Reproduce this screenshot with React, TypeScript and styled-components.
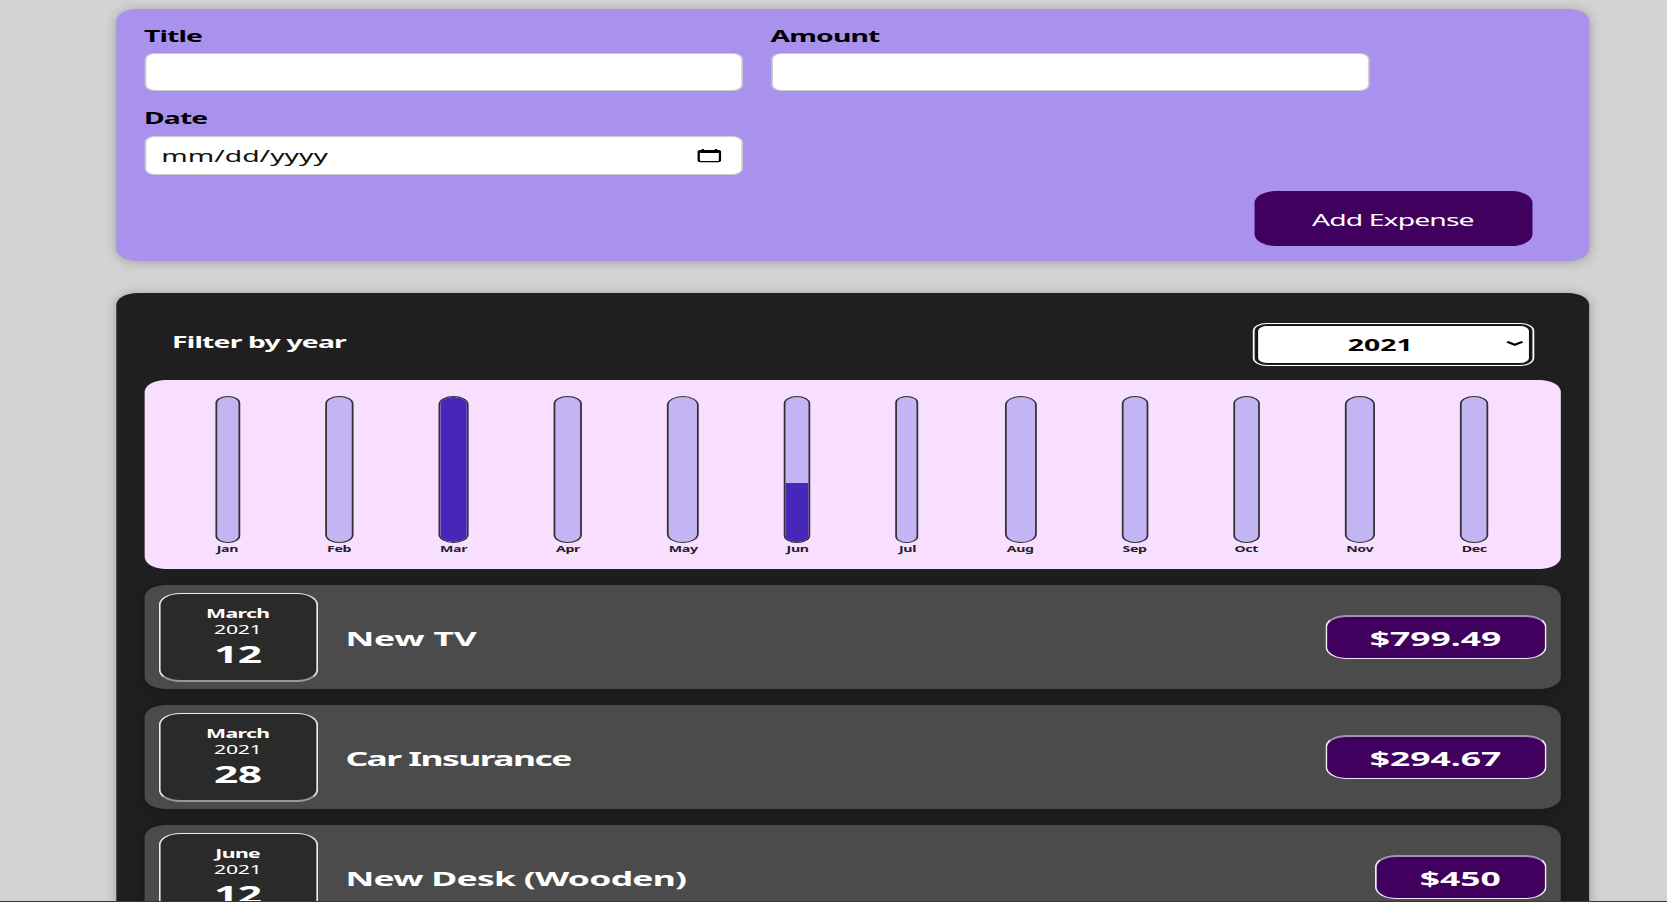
import React, { useState } from "react";
import styled, { createGlobalStyle } from "styled-components";

const STRETCH = 1.7702;

const GlobalStyle = createGlobalStyle`
  * { box-sizing: border-box; }
  html, body { margin: 0; padding: 0; background: #d3d3d3; overflow: hidden; }
  body, input, select, button {
    font-family: "Noto Sans", "Open Sans", sans-serif;
  }
`;

/* The whole page is drawn wide: every part inside is stretched horizontally. */
const Page = styled.div`
  width: ${1669 / STRETCH}px;
  height: 902px;
  overflow: hidden;
  padding: 8.7px 0 0 66px;
  transform: translateX(-0.5px) scaleX(${STRETCH});
  transform-origin: 0 0;
  background: #d3d3d3;
  border-bottom: 1px solid #3a3538;
`;

const Card = styled.section<{ $tone: string }>`
  width: 832px;
  padding: 16px;
  border-radius: 12px;
  background: ${(p) => p.$tone};
  box-shadow: 0 1px 8px rgba(0, 0, 0, 0.25);
`;

const ExpenseForm = styled(Card).attrs({ as: "form" })`
  height: 252.6px;
  margin-bottom: 32px;
`;

const Controls = styled.div`
  display: flex;
  flex-wrap: wrap;
  gap: 16.4px 16px;
`;

const Field = styled.label`
  display: flex;
  flex-direction: column;
  gap: 6.4px;
`;

const Label = styled.span`
  font-size: 16px;
  line-height: 22.4px;
  font-weight: 700;
  color: #000;
  letter-spacing: -0.5px;
  margin-left: -0.4px;
`;

const Input = styled.input`
  width: 338px;
  height: 37.4px;
  padding: 8px;
  border: 1px solid #ccc;
  border-radius: 6px;
  background: #fff;
  font-size: 16px;
`;

const DateBox = styled.div`
  width: 338px;
  height: 39.4px;
  display: flex;
  align-items: center;
  justify-content: space-between;
  padding: 1px 11px 0 8.4px;
  border: 1px solid #ccc;
  border-radius: 6px;
  background: #fff;
  font-size: 16px;
  color: #111;
`;

const Actions = styled.div`
  display: flex;
  justify-content: flex-end;
  padding: 16px 16px 0 0;
`;

const AddButton = styled.button`
  width: 157px;
  height: 54.6px;
  padding: 2px 0.8px 0 0;
  border: 1px solid #40005d;
  border-radius: 12px;
  background: #40005d;
  color: #fff;
  font-size: 16px;
  letter-spacing: -0.5px;
`;

const Expenses = styled(Card)`
  height: 760px;
`;

const FilterRow = styled.div`
  height: 70.5px;
  display: flex;
  align-items: center;
  justify-content: space-between;
  padding: 0 16px 0 15.5px;
`;

const FilterTitle = styled.h2`
  margin: 0;
  padding-bottom: 6px;
  font-size: 16px;
  line-height: 22px;
  color: #fff;
  letter-spacing: -0.46px;
`;

const YearPicker = styled.div`
  position: relative;
  width: 155px;
  height: 39px;
  margin: 0 1px 0 0;
  border: 1px solid #101010;
  border-radius: 6px;
  outline: 1px solid #fff;
  outline-offset: 1px;
  background: #fff;
  display: flex;
  align-items: center;
  color: #000;
  font-weight: 700;
`;

const YearValue = styled.span`
  flex: 1;
  text-align: center;
  padding-right: 15px;
`;

const Chevron = styled.svg`
  position: absolute;
  right: 3px;
  top: 14px;
`;

const Chart = styled.div`
  height: 189.4px;
  display: flex;
  justify-content: space-around;
  padding: 16px 16.8px 16px 15.7px;
  border-radius: 12px;
  background: #f8dfff;
`;

const Month = styled.div<{ $width: number }>`
  width: ${(p) => p.$width / STRETCH}px;
  display: flex;
  flex-direction: column;
  align-items: center;
`;

const BarTrack = styled.div`
  width: 100%;
  height: 147px;
  flex: none;
  display: flex;
  flex-direction: column;
  justify-content: flex-end;
  border: 1px solid #313131;
  border-radius: 12px;
  background: #c3b4f3;
  overflow: hidden;
`;

const BarFill = styled.div`
  background: #4826b9;
`;

const MonthName = styled.span`
  font-size: 8px;
  line-height: 11px;
  font-weight: 700;
  color: #222;
  white-space: nowrap;
  letter-spacing: -0.2px;
`;

const List = styled.ul`
  list-style: none;
  margin: 16px 0 0;
  padding: 0;
  display: flex;
  flex-direction: column;
  gap: 16px;
`;

const Item = styled.li`
  height: 104px;
  display: flex;
  align-items: center;
  padding: 8px;
  border-radius: 12px;
  background: #4b4b4b;
  box-shadow: 0 2px 8px rgba(0, 0, 0, 0.25);
`;

const DateTile = styled.div`
  width: 90px;
  height: 89px;
  display: flex;
  flex-direction: column;
  align-items: center;
  padding: 12px 0.8px 0 0;
  border: 1px solid #ececec;
  border-bottom: 2px solid #989898;
  border-radius: 12px;
  background: #2a2a2a;
  color: #fff;
`;

const TileMonth = styled.span`
  font-size: 12px;
  line-height: 16px;
  font-weight: 700;
  letter-spacing: -0.35px;
`;

const TileYear = styled.span`
  font-size: 12px;
  line-height: 15px;
  letter-spacing: -0.15px;
`;

const TileDay = styled.span`
  font-size: 24px;
  line-height: 33px;
  font-weight: 700;
  letter-spacing: -0.3px;
`;

const ItemTitle = styled.h3<{ $track: number }>`
  flex: 1;
  margin: 2px 16px 0 15.4px;
  font-size: 20px;
  line-height: 27px;
  color: #fff;
  letter-spacing: ${(p) => p.$track}px;
`;

const Price = styled.div<{ $width: number }>`
  width: ${(p) => p.$width}px;
  height: 44.6px;
  display: flex;
  align-items: center;
  justify-content: center;
  padding: 1px 0.6px 0 0;
  border: 1px solid #f4eaf7;
  border-top: 2px solid #a690b0;
  border-radius: 12px;
  background: #40005d;
  color: #fff;
  font-size: 20px;
  font-weight: 700;
`;

const months = [
  { name: "Jan", width: 24.8, fill: 0 },
  { name: "Feb", width: 28.3, fill: 0 },
  { name: "Mar", width: 30.1, fill: 100 },
  { name: "Apr", width: 28.3, fill: 0 },
  { name: "May", width: 31.8, fill: 0 },
  { name: "Jun", width: 26.5, fill: 40.5 },
  { name: "Jul", width: 23, fill: 0 },
  { name: "Aug", width: 31.8, fill: 0 },
  { name: "Sep", width: 26.5, fill: 0 },
  { name: "Oct", width: 26.5, fill: 0 },
  { name: "Nov", width: 30.1, fill: 0 },
  { name: "Dec", width: 28.3, fill: 0 },
];

const expenses = [
  { month: "March", day: "12", title: "New TV", price: "$799.49", width: 125, track: -0.1 },
  { month: "March", day: "28", title: "Car Insurance", price: "$294.67", width: 125, track: -0.86 },
  { month: "June", day: "12", title: "New Desk (Wooden)", price: "$450", width: 97, track: -0.4 },
];

export default function App() {
  const [title, setTitle] = useState("");
  const [amount, setAmount] = useState("");
  return (
    <>
      <GlobalStyle />
      <Page>
        <ExpenseForm $tone="#a992ed">
          <Controls>
            <Field>
              <Label>Title</Label>
              <Input value={title} onChange={(e) => setTitle(e.target.value)} />
            </Field>
            <Field>
              <Label>Amount</Label>
              <Input value={amount} onChange={(e) => setAmount(e.target.value)} />
            </Field>
            <Field>
              <Label>Date</Label>
              <DateBox>
                <span>mm/dd/yyyy</span>
                <svg width="14" height="16" viewBox="0 0 14 16" fill="none" stroke="#000">
                  <rect x="1" y="2.6" width="12" height="11" rx="1" strokeWidth="1.3" />
                  <path d="M1 3.8h12" strokeWidth="2.4" />
                  <path d="M3.3 1v2M10.7 1v2" strokeWidth="1.3" />
                </svg>
              </DateBox>
            </Field>
          </Controls>
          <Actions>
            <AddButton type="button">Add Expense</AddButton>
          </Actions>
        </ExpenseForm>
        <Expenses $tone="#1f1f1f">
          <FilterRow>
            <FilterTitle>Filter by year</FilterTitle>
            <YearPicker>
              <YearValue>2021</YearValue>
              <Chevron width="10" height="8" viewBox="0 0 10 8" fill="none">
                <path d="M.7 1.7L5 4.7l4.3-3" stroke="#000" strokeWidth="2" />
              </Chevron>
            </YearPicker>
          </FilterRow>
          <Chart>
            {months.map((m) => (
              <Month key={m.name} $width={m.width}>
                <BarTrack>
                  <BarFill style={{ height: `${m.fill}%` }} />
                </BarTrack>
                <MonthName>{m.name}</MonthName>
              </Month>
            ))}
          </Chart>
          <List>
            {expenses.map((e) => (
              <Item key={e.title}>
                <DateTile>
                  <TileMonth>{e.month}</TileMonth>
                  <TileYear>2021</TileYear>
                  <TileDay>{e.day}</TileDay>
                </DateTile>
                <ItemTitle $track={e.track}>{e.title}</ItemTitle>
                <Price $width={e.width}>{e.price}</Price>
              </Item>
            ))}
          </List>
        </Expenses>
      </Page>
    </>
  );
}
